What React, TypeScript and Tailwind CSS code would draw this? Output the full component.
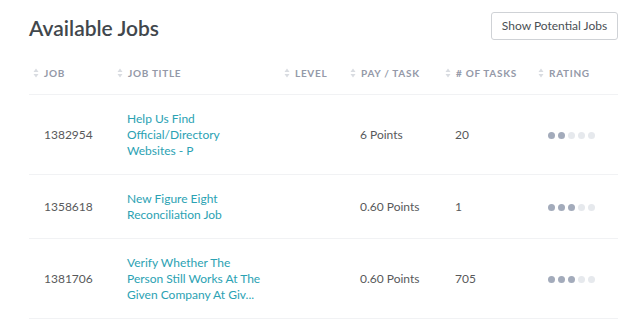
import React from 'react';

const JOBS = [
    { id: '1382954', title: ['Help Us Find', 'Official/Directory', 'Websites - P'], pay: '6 Points', tasks: '20', rating: 2 },
    { id: '1358618', title: ['New Figure Eight', 'Reconciliation Job'], pay: '0.60 Points', tasks: '1', rating: 3 },
    { id: '1381706', title: ['Verify Whether The', 'Person Still Works At The', 'Given Company At Giv...'], pay: '0.60 Points', tasks: '705', rating: 3 },
];

const COLS = ['Job', 'Job Title', 'Level', 'Pay / Task', '# of Tasks', 'Rating'];

const SortIcon = () => (
    <svg width="6" height="10" viewBox="0 0 6 10" className="mr-[5px] shrink-0">
        <path d="M3 0.5 L5.5 4 L0.5 4 Z" fill="#d9dce1" />
        <path d="M3 9.5 L5.5 6 L0.5 6 Z" fill="#d9dce1" />
    </svg>
);

const Rating = ({ value }: { value: number }) => (
    <div className="flex gap-[3px]">
        {[0, 1, 2, 3, 4].map((i) => (
            <span key={i} className={`w-[7px] h-[7px] rounded-full ${i < value ? 'bg-[#a3abbb]' : 'bg-[#e6e9ed]'}`}></span>
        ))}
    </div>
);

const App = () => {
    const grid = 'grid grid-cols-[84px_167px_66px_95px_93px_1fr] pl-1';

    return (
        <div className="w-[640px] h-[322px] bg-white overflow-hidden font-['Lato','Liberation_Sans',sans-serif]">
            <div className="ml-[29px] w-[589px]">
                {/* Header */}
                <div className="flex items-start justify-between pt-3">
                    <h1 className="text-[21px] leading-[28px] font-semibold text-[#41474c] mt-[2px]">Available Jobs</h1>
                    <button className="h-[28px] w-[127px] border border-[#cfd2d6] rounded-[3px] text-[12px] text-[#4a4f54]">
                        Show Potential Jobs
                    </button>
                </div>

                {/* Table head */}
                <div className={`${grid} mt-[24px] h-[29px] items-start pt-[1px] border-b border-[#f1f2f4]`}>
                    {COLS.map((c) => (
                        <div key={c} className="flex items-center h-[12px] text-[10px] font-bold uppercase tracking-[0.07em] text-[#9499a8]">
                            <SortIcon />
                            {c}
                        </div>
                    ))}
                </div>

                {/* Rows */}
                {JOBS.map((job) => (
                    <div key={job.id} className={`${grid} items-center pt-[16px] pb-[15px] border-b border-[#f1f2f4] text-[12px] leading-[16px]`}>
                        <div className="pl-[11px] text-[#58595b]">{job.id}</div>
                        <div className="pl-[10px] text-[#2ba2b3]">
                            {job.title.map((t) => (
                                <div key={t}>{t}</div>
                            ))}
                        </div>
                        <div></div>
                        <div className="pl-[10px] text-[#58595b]">{job.pay}</div>
                        <div className="pl-[10px] text-[#58595b]">{job.tasks}</div>
                        <div className="pl-[10px]">
                            <Rating value={job.rating} />
                        </div>
                    </div>
                ))}
            </div>
        </div>
    );
};

export default App;
